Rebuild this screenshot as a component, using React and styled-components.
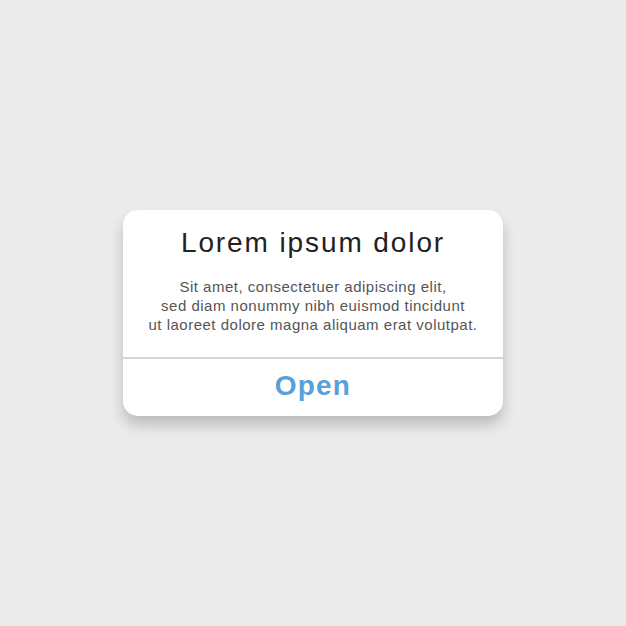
import React from "react";
import styled, { createGlobalStyle } from "styled-components";

const GlobalStyle = createGlobalStyle`
  html, body {
    margin: 0;
    padding: 0;
    background: #ebebeb;
  }
  body {
    font-family: "Liberation Sans", Arial, sans-serif;
  }
`;

const Page = styled.div`
  width: 626px;
  height: 626px;
  display: flex;
  align-items: center;
  justify-content: center;
`;

const Card = styled.div`
  width: 380px;
  background: #ffffff;
  border-radius: 15px;
  box-shadow: 0 9px 14px rgba(0, 0, 0, 0.2);
  display: flex;
  flex-direction: column;
  overflow: hidden;
`;

const Body = styled.div`
  padding: 16px 10px 23px;
  text-align: center;
`;

const Title = styled.h2`
  margin: 0 0 17px;
  font-size: 28px;
  font-weight: 400;
  letter-spacing: 1.9px;
  color: #222222;
  line-height: 34px;
`;

const Message = styled.p`
  margin: 0;
  font-size: 15px;
  line-height: 19px;
  letter-spacing: 0.5px;
  color: #555555;
`;

const Divider = styled.div`
  height: 2px;
  background: #d5d5d5;
`;

const Action = styled.button`
  height: 57px;
  padding: 0 0 3px;
  border: none;
  background: transparent;
  font-family: "Liberation Sans", Arial, sans-serif;
  font-size: 28px;
  font-weight: 700;
  letter-spacing: 1.2px;
  color: #5aa0d8;
  cursor: pointer;
`;

export default function App() {
  return (
    <>
      <GlobalStyle />
      <Page>
        <Card>
          <Body>
            <Title>Lorem ipsum dolor</Title>
            <Message>
              Sit amet, consectetuer adipiscing elit,
              <br />
              sed diam nonummy nibh euismod tincidunt
              <br />
              ut laoreet dolore magna aliquam erat volutpat.
            </Message>
          </Body>
          <Divider />
          <Action>Open</Action>
        </Card>
      </Page>
    </>
  );
}
